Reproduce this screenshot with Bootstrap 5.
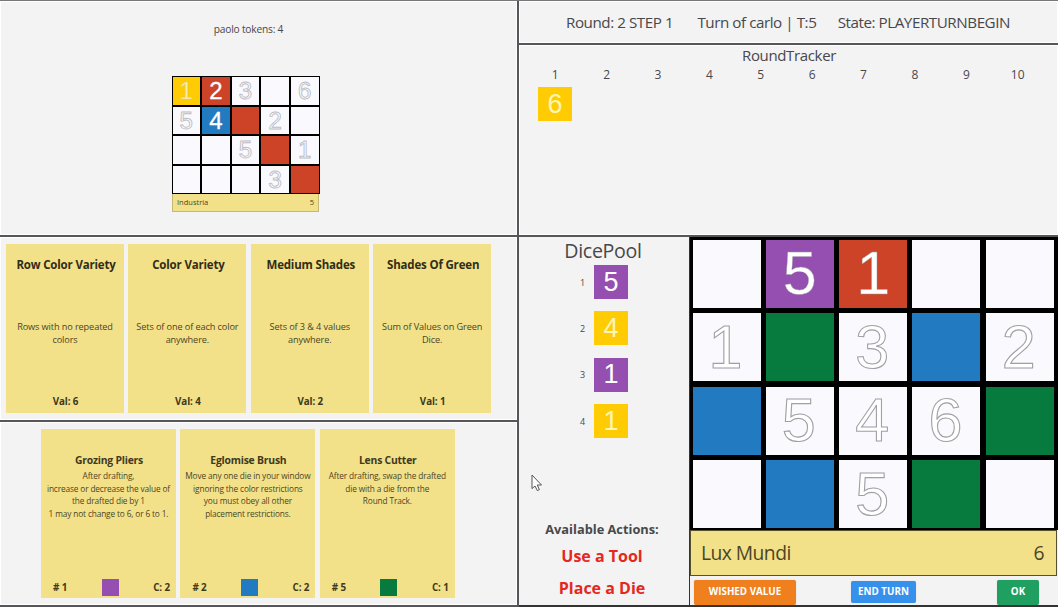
<!DOCTYPE html>
<html lang="en">
<head>
<meta charset="utf-8">
<title>Sagrada</title>
<link href="https://cdn.jsdelivr.net/npm/bootstrap@5.3.0/dist/css/bootstrap.min.css" rel="stylesheet">
<style>
:root{--line:#56565a;--paper:#f3f3f4;--sand:#f2e189}
body{width:1058px;height:607px;overflow:hidden;background:var(--paper);color:#48484a;font-family:"Open Sans","Noto Sans",sans-serif;line-height:1}
.game{width:1058px;height:607px;grid-template-columns:517px 541px;border-top:1px solid #77777a}
.side-l{display:grid;grid-template-rows:236px 185px 185px}
.side-r{display:grid;grid-template-rows:44px 192px 370px;border-left:2px solid var(--line)}
.pane{border-bottom:2px solid var(--line);box-shadow:inset 0 0 0 1px #fff;min-width:0}
/* window pattern boards */
.pattern{display:grid;background:#000;font-family:"Liberation Sans",Arial,sans-serif}
.pattern i{display:flex;align-items:center;justify-content:center;font-style:normal;background:#f9f9fe;color:#fff}
.mini{width:148px;height:118px;grid-template-columns:repeat(5,1fr);grid-template-rows:repeat(4,1fr);gap:2px;padding:1px;font-size:24px}
.mini i{-webkit-text-stroke:.9px #bcbcc2;padding-top:1px}
.mini i.y{-webkit-text-stroke:.5px #dccb8c;color:#fff3b0}
.mini i.d{-webkit-text-stroke:.3px #fff}
.big{width:368px;height:293px;grid-template-columns:repeat(5,68px);grid-template-rows:repeat(4,68px);column-gap:5.3px;row-gap:5.5px;padding:2.5px 3px 2px 2.5px;font-size:61px}
.big i{-webkit-text-stroke:1.1px #a0a0a5;padding-right:2px}
.big i.d{-webkit-text-stroke:.4px #999;padding-right:0}
.pattern .v,.v{background:#954fb0}.pattern .y,.y{background:#ffcc03}
.pattern .r{background:#cd4328}.pattern .b,.b{background:#227ac0}.pattern .g,.g{background:#077a3e}
.plate{background:var(--sand);color:#4c4525}
.mini-plate{width:147px;height:18px;font-size:7.5px;border:1px solid #c3b875;border-top:0;padding:1px 4px 0}
.big-plate{height:46px;width:367px;font-size:19.3px;letter-spacing:-.55px;border:1px solid #55502f;padding:0 12px 0 10px}
.goal,.tool{background:var(--sand);color:#4c4525;text-align:center;flex:none}
.goal{width:118px;height:169px}
.goal h6{font-size:11.5px;font-weight:700;color:#332d16;margin:15px 0 0;line-height:12px;letter-spacing:-.18px;white-space:nowrap;padding-left:2px}
.goal p{font-size:9.2px;line-height:13.3px;letter-spacing:-.12px;margin:49px 0 0;height:64px;white-space:nowrap}
.goal b,.tool b{font-size:9.8px;letter-spacing:-.1px;color:#40391c}
.goal b{display:block;margin-top:12px;line-height:11px;padding-left:1px}
.tool{width:135px;height:169px}
.tool h6{font-size:10.4px;font-weight:700;color:#40391c;margin:25px 0 0;line-height:12px;letter-spacing:-.22px;padding-left:1px}
.tool p{font-size:8.3px;line-height:12.7px;letter-spacing:-.14px;margin:4px 0 0;height:109px;white-space:nowrap}
.tool-foot{padding:0 6px 0 12px}
.chip{width:17px;height:17px}
.stat{font-size:15.2px;letter-spacing:-.45px;padding:2px 48px 0 47px}
.die{width:34px;height:34px;color:#fff;font:27px "Liberation Sans",Arial,sans-serif;display:flex;align-items:center;justify-content:center}
.die.y{color:#fff6b5}
.track{display:grid;grid-template-columns:repeat(10,51.4px);padding-left:10.5px;font-size:12px;text-align:center}
.pool{width:170px}
.pool-row{height:34px;margin-bottom:12.4px;padding-left:61px;font-size:9px}
.pool-row .n{width:14px}
.acts{font-weight:700;text-align:center}
.boardcol{border-left:1px solid #333;width:369px}
.key{color:#fff;font-weight:700;border:0;border-radius:2px;padding:0;line-height:1;display:flex;align-items:center;justify-content:center;box-shadow:0 0 1px #8888;font-size:9.8px}
.pointer{position:absolute;left:531px;top:474px}
</style>
</head>
<body>
<main class="game d-grid">
  <div class="side-l">
    <section class="pane d-flex flex-column align-items-center" style="padding-right:26px">
      <div style="margin:22px 0 41px 6px;font-size:10.2px;letter-spacing:-.2px;line-height:12px">paolo tokens: 4</div>
      <div class="pattern mini">
        <i class="y">1</i><i class="r d">2</i><i>3</i><i></i><i>6</i>
        <i>5</i><i class="b d">4</i><i class="r"></i><i>2</i><i></i>
        <i></i><i></i><i>5</i><i class="r"></i><i>1</i>
        <i></i><i></i><i></i><i>3</i><i class="r"></i>
      </div>
      <div class="plate mini-plate d-flex justify-content-between align-items-center"><span>Industria</span><span>5</span></div>
    </section>
    <section class="pane d-flex" style="padding:7px 0 0 6px;gap:4.4px">
      <article class="goal"><h6>Row Color Variety</h6><p>Rows with no repeated<br>colors</p><b>Val: 6</b></article>
      <article class="goal"><h6>Color Variety</h6><p>Sets of one of each color<br>anywhere.</p><b>Val: 4</b></article>
      <article class="goal"><h6>Medium Shades</h6><p>Sets of 3 &amp; 4 values<br>anywhere.</p><b>Val: 2</b></article>
      <article class="goal"><h6>Shades Of Green</h6><p>Sum of Values on Green<br>Dice.</p><b>Val: 1</b></article>
    </section>
    <section class="pane d-flex" style="padding:7px 0 0 41px;gap:4.4px">
      <article class="tool"><h6>Grozing Pliers</h6><p>After drafting,<br>increase or decrease the value of<br>the drafted die by 1<br>1 may not change to 6, or 6 to 1.</p>
        <div class="tool-foot d-flex justify-content-between align-items-center"><b>#&nbsp;1</b><span class="chip v"></span><b>C: 2</b></div></article>
      <article class="tool"><h6>Eglomise Brush</h6><p>Move any one die in your window<br>ignoring the color restrictions<br>you must obey all other<br>placement restrictions.</p>
        <div class="tool-foot d-flex justify-content-between align-items-center"><b>#&nbsp;2</b><span class="chip b"></span><b>C: 2</b></div></article>
      <article class="tool"><h6>Lens Cutter</h6><p>After drafting, swap the drafted<br>die with a die from the<br>Round Track.</p>
        <div class="tool-foot d-flex justify-content-between align-items-center"><b>#&nbsp;5</b><span class="chip g"></span><b>C: 1</b></div></article>
    </section>
  </div>
  <div class="side-r">
    <section class="pane stat d-flex justify-content-between align-items-center"><span>Round: 2 STEP 1</span><span style="padding-left:3px">Turn of carlo | T:5</span><span>State: PLAYERTURNBEGIN</span></section>
    <section class="pane">
      <div class="text-center" style="font-size:15px;letter-spacing:-.35px;line-height:16px;padding:2px 0 0 1px">RoundTracker</div>
      <div class="track" style="margin-top:6px"><span>1</span><span>2</span><span>3</span><span>4</span><span>5</span><span>6</span><span>7</span><span>8</span><span>9</span><span>10</span></div>
      <div class="die y" style="margin:6px 0 0 19px">6</div>
    </section>
    <section class="d-flex" style="border-bottom:2px solid #333">
      <div class="pool">
        <div class="text-center" style="font-size:19.6px;letter-spacing:-.3px;line-height:20px;padding:4px 2px 4px 0">DicePool</div>
        <div class="pool-row d-flex align-items-center"><span class="n">1</span><span class="die v">5</span></div>
        <div class="pool-row d-flex align-items-center"><span class="n">2</span><span class="die y">4</span></div>
        <div class="pool-row d-flex align-items-center"><span class="n">3</span><span class="die v">1</span></div>
        <div class="pool-row d-flex align-items-center"><span class="n">4</span><span class="die y">1</span></div>
        <div class="acts" style="padding:71px 4px 0 0">
          <div style="font-size:12.8px;line-height:14px">Available Actions:</div>
          <div style="font-size:16px;line-height:32px;color:#e5281e;margin-top:4px">Use a Tool<br>Place a Die</div>
        </div>
      </div>
      <div class="boardcol">
        <div class="pattern big">
          <i></i><i class="v d">5</i><i class="r d">1</i><i></i><i></i>
          <i>1</i><i class="g"></i><i>3</i><i class="b"></i><i>2</i>
          <i class="b"></i><i>5</i><i>4</i><i>6</i><i class="g"></i>
          <i></i><i class="b"></i><i>5</i><i class="g"></i><i></i>
        </div>
        <div class="plate big-plate d-flex justify-content-between align-items-center"><span>Lux Mundi</span><span>6</span></div>
        <div class="d-flex align-items-center justify-content-between" style="padding:2px 19px 0 4px;height:30px">
          <button class="key" style="width:102px;height:25px;background:#f0801e">WISHED VALUE</button>
          <button class="key" style="width:65px;height:22px;background:#3591ec;margin-right:26px">END TURN</button>
          <button class="key" style="width:42px;height:25px;background:#1fa060">OK</button>
        </div>
      </div>
    </section>
  </div>
</main>
<svg class="pointer" width="12" height="18" viewBox="0 0 12 18"><path d="M1 1V14.6L4 12L6.3 16.6L8.4 15.6L6.2 11H10.5Z" fill="#fff" stroke="#555" stroke-width="1"/></svg>
<script src="https://cdn.jsdelivr.net/npm/bootstrap@5.3.0/dist/js/bootstrap.bundle.min.js"></script>
</body>
</html>
